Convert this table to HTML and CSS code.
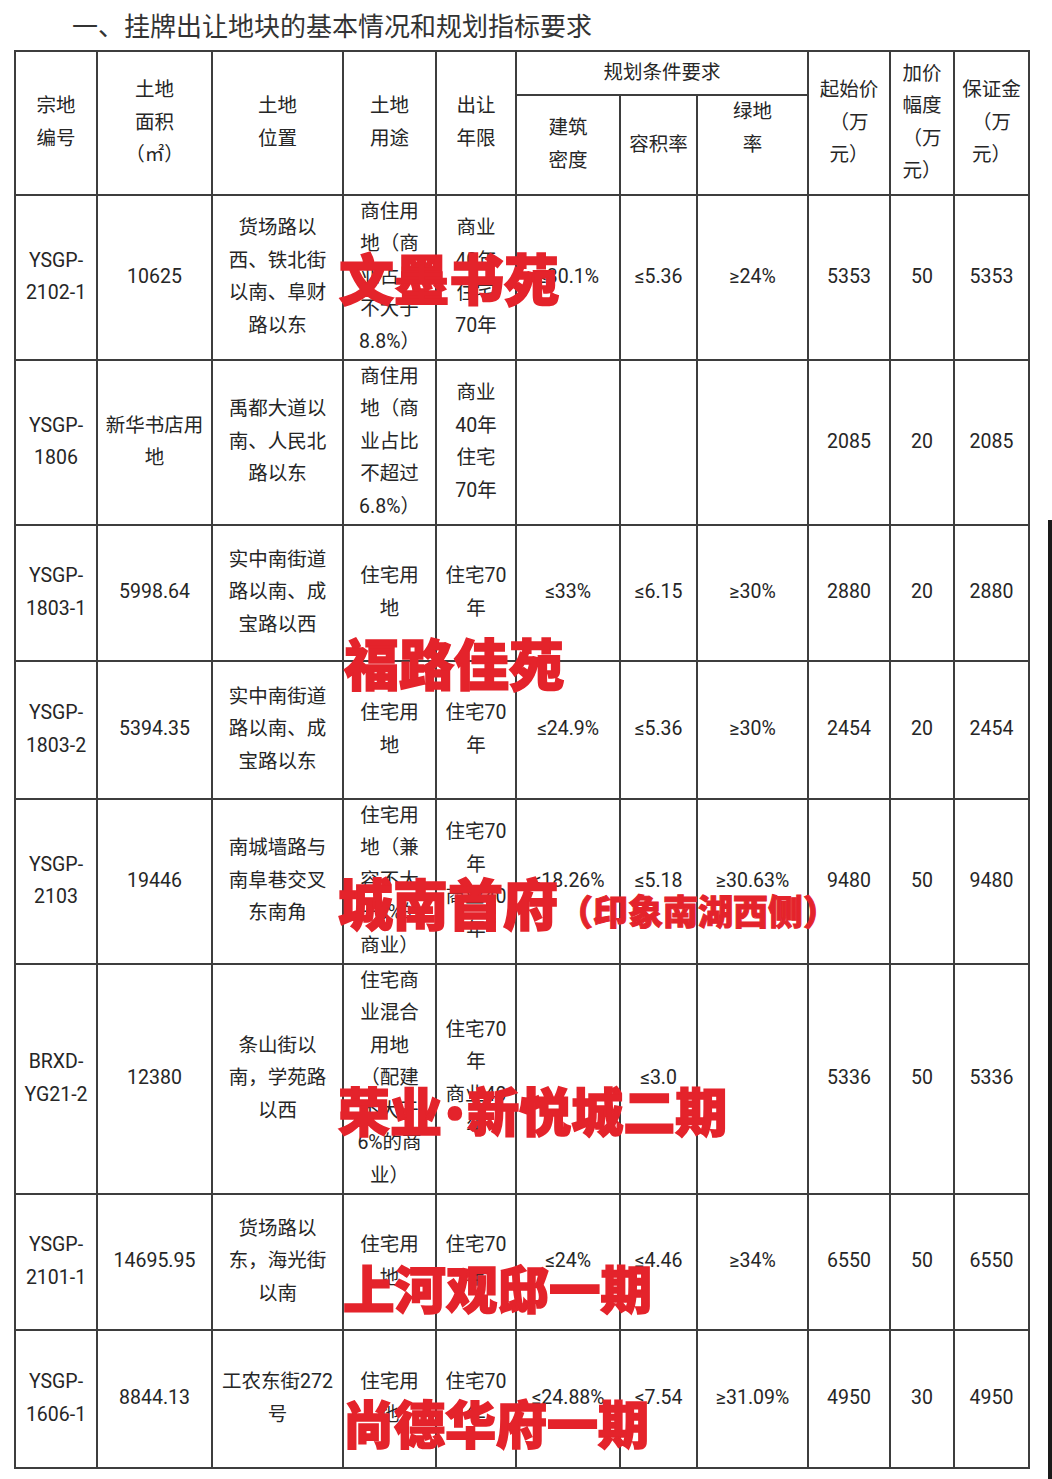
FILE: index.html
```html
<!DOCTYPE html>
<html lang="zh-CN">
<head>
<meta charset="utf-8">
<title>挂牌出让地块</title>
<link rel="stylesheet" href="styles.css">
</head>
<body>
<div class="sheet">
  <h1 class="title">一、挂牌出让地块的基本情况和规划指标要求</h1>
  <table class="grid">
    <colgroup>
      <col class="c1"><col class="c2"><col class="c3"><col class="c4"><col class="c5"><col class="c6"><col class="c7"><col class="c8"><col class="c9"><col class="c10"><col class="c11">
    </colgroup>
    <thead>
      <tr class="h1">
        <th rowspan="2">宗地<br>编号</th>
        <th rowspan="2">土地<br>面积<br>（㎡）</th>
        <th rowspan="2">土地<br>位置</th>
        <th rowspan="2">土地<br>用途</th>
        <th rowspan="2">出让<br>年限</th>
        <th colspan="3">规划条件要求</th>
        <th rowspan="2">起始价<br>（万<br>元）</th>
        <th rowspan="2">加价<br>幅度<br>（万<br>元）</th>
        <th rowspan="2">保证金<br>（万<br>元）</th>
      </tr>
      <tr class="h2">
        <th class="sub">建筑<br>密度</th>
        <th class="sub">容积率</th>
        <th class="sub">绿地<br>率<br>&nbsp;</th>
      </tr>
    </thead>
    <tbody>
      <tr class="r165">
        <td>YSGP-<br>2102-1</td><td>10625</td><td>货场路以<br>西、铁北街<br>以南、阜财<br>路以东</td><td>商住用<br>地（商<br>业占比<br>不大于<br>8.8%）</td><td>商业<br>40年<br>住宅<br>70年</td><td>≤30.1%</td><td>≤5.36</td><td>≥24%</td><td>5353</td><td>50</td><td>5353</td>
      </tr>
      <tr class="r165">
        <td>YSGP-<br>1806</td><td>新华书店用<br>地</td><td>禹都大道以<br>南、人民北<br>路以东</td><td>商住用<br>地（商<br>业占比<br>不超过<br>6.8%）</td><td>商业<br>40年<br>住宅<br>70年</td><td></td><td></td><td></td><td>2085</td><td>20</td><td>2085</td>
      </tr>
      <tr class="r136">
        <td>YSGP-<br>1803-1</td><td>5998.64</td><td>实中南街道<br>路以南、成<br>宝路以西</td><td>住宅用<br>地</td><td>住宅70<br>年</td><td>≤33%</td><td>≤6.15</td><td>≥30%</td><td>2880</td><td>20</td><td>2880</td>
      </tr>
      <tr class="r138">
        <td>YSGP-<br>1803-2</td><td>5394.35</td><td>实中南街道<br>路以南、成<br>宝路以东</td><td>住宅用<br>地</td><td>住宅70<br>年</td><td>≤24.9%</td><td>≤5.36</td><td>≥30%</td><td>2454</td><td>20</td><td>2454</td>
      </tr>
      <tr class="r165">
        <td>YSGP-<br>2103</td><td>19446</td><td>南城墙路与<br>南阜巷交叉<br>东南角</td><td>住宅用<br>地（兼<br>容不大<br>于5%的<br>商业）</td><td>住宅70<br>年<br>商业40<br>年</td><td>≤18.26%</td><td>≤5.18</td><td>≥30.63%</td><td>9480</td><td>50</td><td>9480</td>
      </tr>
      <tr class="r230">
        <td>BRXD-<br>YG21-2</td><td>12380</td><td>条山街以<br>南，学苑路<br>以西</td><td>住宅商<br>业混合<br>用地<br>（配建<br>不大于<br>6%的商<br>业）</td><td>住宅70<br>年<br>商业40<br>年</td><td></td><td>≤3.0</td><td></td><td>5336</td><td>50</td><td>5336</td>
      </tr>
      <tr class="r136">
        <td>YSGP-<br>2101-1</td><td>14695.95</td><td>货场路以<br>东，海光街<br>以南</td><td>住宅用<br>地</td><td>住宅70<br>年</td><td>≤24%</td><td>≤4.46</td><td>≥34%</td><td>6550</td><td>50</td><td>6550</td>
      </tr>
      <tr class="r138">
        <td>YSGP-<br>1606-1</td><td>8844.13</td><td>工农东街272<br>号</td><td>住宅用<br>地</td><td>住宅70<br>年</td><td>≤24.88%</td><td>≤7.54</td><td>≥31.09%</td><td>4950</td><td>30</td><td>4950</td>
      </tr>
    </tbody>
  </table>

  <div class="tag tag-1">文墨书苑</div>
  <div class="tag tag-2">福路佳苑</div>
  <div class="tag tag-3">城南首府<span class="tag-note">（印象南湖西侧）</span></div>
  <div class="tag tag-4">荣业<span class="tag-dot">•</span>新悦城二期</div>
  <div class="tag tag-5">上河观邸一期</div>
  <div class="tag tag-6">尚德华府一期</div>
  <div class="edge"></div>
</div>
</body>
</html>
```

FILE: styles.css
```css
html, body {
  margin: 0;
  padding: 0;
  background: #ffffff;
}

body {
  width: 1052px;
  min-height: 1479px;
  font-family: Roboto, "Noto Sans CJK SC", sans-serif;
  color: #262626;
}

.sheet {
  position: relative;
  width: 1052px;
  height: 1479px;
  overflow: hidden;
}

.title {
  margin: 0;
  height: 50px;
  padding-left: 72px;
  font-family: "Noto Sans CJK SC", sans-serif;
  font-weight: 400;
  font-size: 26px;
  line-height: 50px;
  color: #333333;
}

.grid {
  margin-left: 14px;
  width: 1016px;
  table-layout: fixed;
  border-collapse: collapse;
  font-size: 19.5px;
  line-height: 32.5px;
}

.grid th,
.grid td {
  border: 2px solid #3d3d3d;
  padding: 0 4px;
  text-align: center;
  vertical-align: middle;
  white-space: nowrap;
  font-weight: 400;
  overflow: visible;
}

.c1 { width: 82px; }
.c2 { width: 115px; }
.c3 { width: 131px; }
.c4 { width: 93px; }
.c5 { width: 80px; }
.c6 { width: 104px; }
.c7 { width: 77px; }
.c8 { width: 111px; }
.c9 { width: 82px; }
.c10 { width: 64px; }
.c11 { width: 75px; }

.h1 { height: 44px; }
.h2 { height: 98px; }
.sub { padding-top: 8px; }

.r165 { height: 165px; }
.r136 { height: 136px; }
.r138 { height: 138px; }
.r230 { height: 230px; }

.tag {
  position: absolute;
  font-family: "Noto Sans CJK SC", sans-serif;
  font-weight: 900;
  color: #e4232b;
  -webkit-text-stroke: 1.6px #e4232b;
  line-height: 1;
  white-space: nowrap;
  font-size: 55px;
}

.tag-1 { left: 339px; top: 249px; }
.tag-2 { left: 344px; top: 634px; }
.tag-3 { left: 338px; top: 874px; }
.tag-4 { left: 338px; top: 1084px; font-size: 52px; }
.tag-5 { left: 343px; top: 1261px; font-size: 51.5px; }
.tag-6 { left: 343px; top: 1397px; font-size: 51px; }

.tag-note {
  font-size: 35px;
  -webkit-text-stroke: 1px #e4232b;
}

.tag-dot {
  font-family: Roboto, sans-serif;
  margin: 0 3px;
}

.edge {
  position: absolute;
  right: 0;
  top: 520px;
  width: 4px;
  height: 959px;
  background: #1a1a1a;
}
```
